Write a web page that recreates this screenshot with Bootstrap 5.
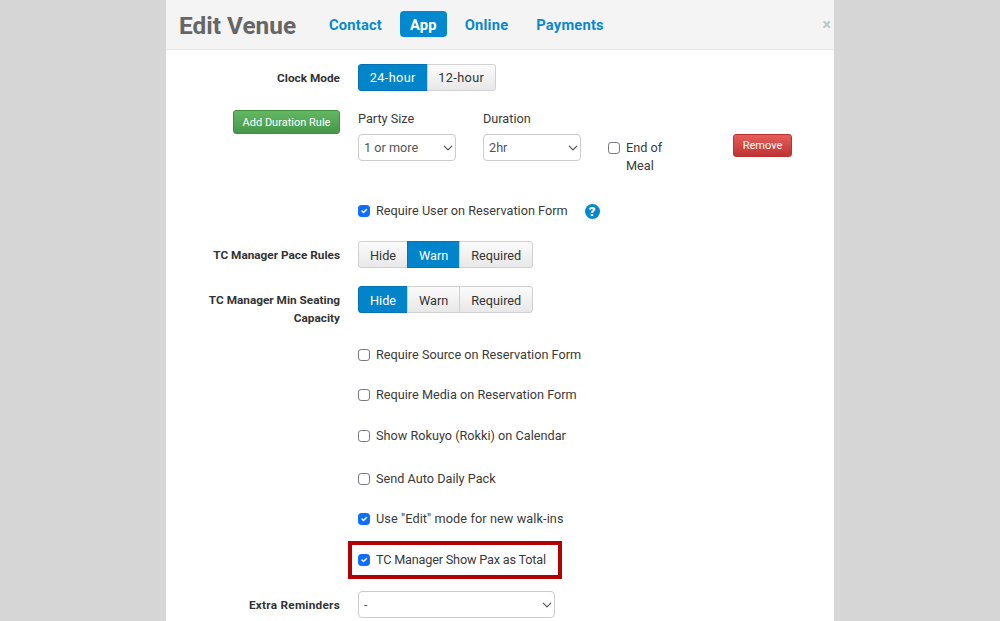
<!DOCTYPE html>
<html lang="en">
<head>
<meta charset="utf-8">
<title>Edit Venue</title>
<link rel="stylesheet" href="https://cdn.jsdelivr.net/npm/bootstrap@5.3.0/dist/css/bootstrap.min.css">
<style>
html,body{height:621px;overflow:hidden}
body{background:#d6d6d6;font-family:"Roboto","Liberation Sans",sans-serif;font-size:12.7px;color:#3a3a3a;line-height:18px}
.venue-sheet{width:668px;height:621px;margin-left:166px;background:#fff;overflow:hidden;position:relative}
.venue-head{height:50px;background:#f4f4f4;border-bottom:1px solid #e8e8e8;padding:0 13px;position:relative}
.venue-title{font-size:24.4px;font-weight:700;color:#666;margin:0 22.5px 0 0;padding-top:2px;line-height:50px;width:117px;white-space:nowrap}
.venue-tab{font-size:14.7px;font-weight:700;color:#0a88cc;text-decoration:none;padding:0 10.5px;height:26px;line-height:28px;border-radius:4px;display:block;margin:0 7px 1px 0;letter-spacing:.2px}
.venue-tab.on{background:#0288cf;color:#fff}
.venue-close{position:absolute;right:3px;top:16px;font-size:16px;font-weight:700;color:#c4c4c4;line-height:18px}
.field-row{display:flex}
.field-label{width:174px;text-align:right;font-weight:700;font-size:11.8px;color:#333;flex:none}
.label-wide{letter-spacing:.25px}
.field-body{margin-left:18px;flex:1}
.field-shift{margin-left:192px}
.seg .btn{font-size:12.7px;line-height:25px;height:27px;padding:0 11px;color:#333;background:linear-gradient(#fbfbfb,#e8e8e8);border:1px solid #d0d0d0;border-radius:3px;box-shadow:none}
.seg .btn.on{background:#0284cb;border-color:#0274b6;color:#fff}
.seg .btn.wide-btn{width:69.5px;padding:0;letter-spacing:.4px}
.seg-low .btn{padding-top:1px}
.pick{font-family:inherit;font-size:12.7px;color:#555;height:27px;padding:0 24px 0 5px;line-height:25px;border:1px solid #ccc;border-radius:4px;background-image:url("data:image/svg+xml,%3csvg xmlns='http://www.w3.org/2000/svg' viewBox='0 0 16 16'%3e%3cpath fill='none' stroke='%23555' stroke-linecap='round' stroke-linejoin='round' stroke-width='2' d='m2 5 6 6 6-6'/%3e%3c/svg%3e");background-position:right 2px center;background-size:10px 10px}
.pick-s{width:98px}
.pick-l{width:197px}
.tick{width:12px;height:12px;margin:0 6px 1px 0;flex:none;border:1px solid #77777f;border-radius:2.5px}
.tick:checked{background-color:#0d6efd;border-color:#0d6efd}
.tick-row{display:flex;align-items:center;height:18px}
.text-tight{letter-spacing:-.2px}
.text-loose{letter-spacing:.1px}
.btn-go,.btn-stop{font-size:11px;color:#fff;padding:0;border-radius:3px}
.btn-go{width:107px;height:24px;line-height:24px;background:linear-gradient(#63b862,#46974a);border:1px solid #41903f}
.btn-stop{width:59px;height:23px;padding-top:2px;background:linear-gradient(#e85d5b,#bd3434);border:1px solid #b83232}
.help-dot{width:15px;height:15px;border-radius:50%;background:#0288cf;color:#fff;font-size:13px;font-weight:900;line-height:15px;text-align:center;margin-left:17px;flex:none}
.flag-box{position:absolute;left:182px;top:541px;width:214px;height:38px;border:4px solid #b30000}
.r1{padding-top:14px}.r2{margin-top:19px}.r3{margin-top:27px}.r4{margin-top:21px}.r5{margin-top:18px}.r6{margin-top:19px}.r7{margin-top:22px}.r8{margin-top:25px}.r9{margin-top:23px}
.col-party{width:125px}
.cap-line{margin-bottom:6px}
.col-meal{width:125px;padding-top:29px}
.col-stop{padding-top:24px}
.two-line-label{padding-top:5px}
.tick-top{margin-top:3px}
</style>
</head>
<body>
<div class="venue-sheet">
  <div class="venue-head d-flex align-items-center">
    <h1 class="venue-title">Edit Venue</h1>
    <a class="venue-tab" href="#">Contact</a>
    <a class="venue-tab on" href="#">App</a>
    <a class="venue-tab" href="#">Online</a>
    <a class="venue-tab" href="#">Payments</a>
    <span class="venue-close">×</span>
  </div>

  <div class="field-row r1 align-items-center">
    <div class="field-label">Clock Mode</div>
    <div class="field-body"><div class="btn-group seg"><button class="btn on wide-btn">24-hour</button><button class="btn wide-btn">12-hour</button></div></div>
  </div>

  <div class="field-row r2">
    <div class="field-label"><button class="btn btn-go">Add Duration Rule</button></div>
    <div class="field-body d-flex">
      <div class="col-party">
        <div class="cap-line">Party Size</div>
        <select class="form-select pick pick-s"><option>1 or more</option></select>
      </div>
      <div class="col-party">
        <div class="cap-line">Duration</div>
        <select class="form-select pick pick-s"><option>2hr</option></select>
      </div>
      <div class="col-meal">
        <div class="d-flex align-items-start"><input class="form-check-input tick tick-top" type="checkbox"><span>End of<br>Meal</span></div>
      </div>
      <div class="col-stop"><button class="btn btn-stop">Remove</button></div>
    </div>
  </div>

  <div class="field-row r3">
    <div class="field-shift tick-row">
      <input class="form-check-input tick" type="checkbox" checked><span>Require User on Reservation Form</span><span class="help-dot">?</span>
    </div>
  </div>

  <div class="field-row r4 align-items-center">
    <div class="field-label">TC Manager Pace Rules</div>
    <div class="field-body"><div class="btn-group seg seg-low"><button class="btn">Hide</button><button class="btn on">Warn</button><button class="btn">Required</button></div></div>
  </div>

  <div class="field-row r5">
    <div class="field-label two-line-label">TC Manager Min Seating Capacity</div>
    <div class="field-body"><div class="btn-group seg seg-low"><button class="btn on">Hide</button><button class="btn">Warn</button><button class="btn">Required</button></div></div>
  </div>

  <div class="field-row r6"><div class="field-shift tick-row"><input class="form-check-input tick" type="checkbox"><span>Require Source on Reservation Form</span></div></div>
  <div class="field-row r7"><div class="field-shift tick-row"><input class="form-check-input tick" type="checkbox"><span>Require Media on Reservation Form</span></div></div>
  <div class="field-row r9"><div class="field-shift tick-row"><input class="form-check-input tick" type="checkbox"><span>Show Rokuyo (Rokki) on Calendar</span></div></div>
  <div class="field-row r8"><div class="field-shift tick-row"><input class="form-check-input tick" type="checkbox"><span>Send Auto Daily Pack</span></div></div>
  <div class="field-row r7"><div class="field-shift tick-row"><input class="form-check-input tick" type="checkbox" checked><span class="text-loose">Use "Edit" mode for new walk-ins</span></div></div>
  <div class="field-row r9"><div class="field-shift tick-row"><input class="form-check-input tick" type="checkbox" checked><span class="text-tight">TC Manager Show Pax as Total</span></div></div>

  <div class="field-row r7 align-items-center">
    <div class="field-label label-wide">Extra Reminders</div>
    <div class="field-body"><select class="form-select pick pick-l"><option>-</option></select></div>
  </div>

  <div class="flag-box"></div>
</div>
</body>
</html>
